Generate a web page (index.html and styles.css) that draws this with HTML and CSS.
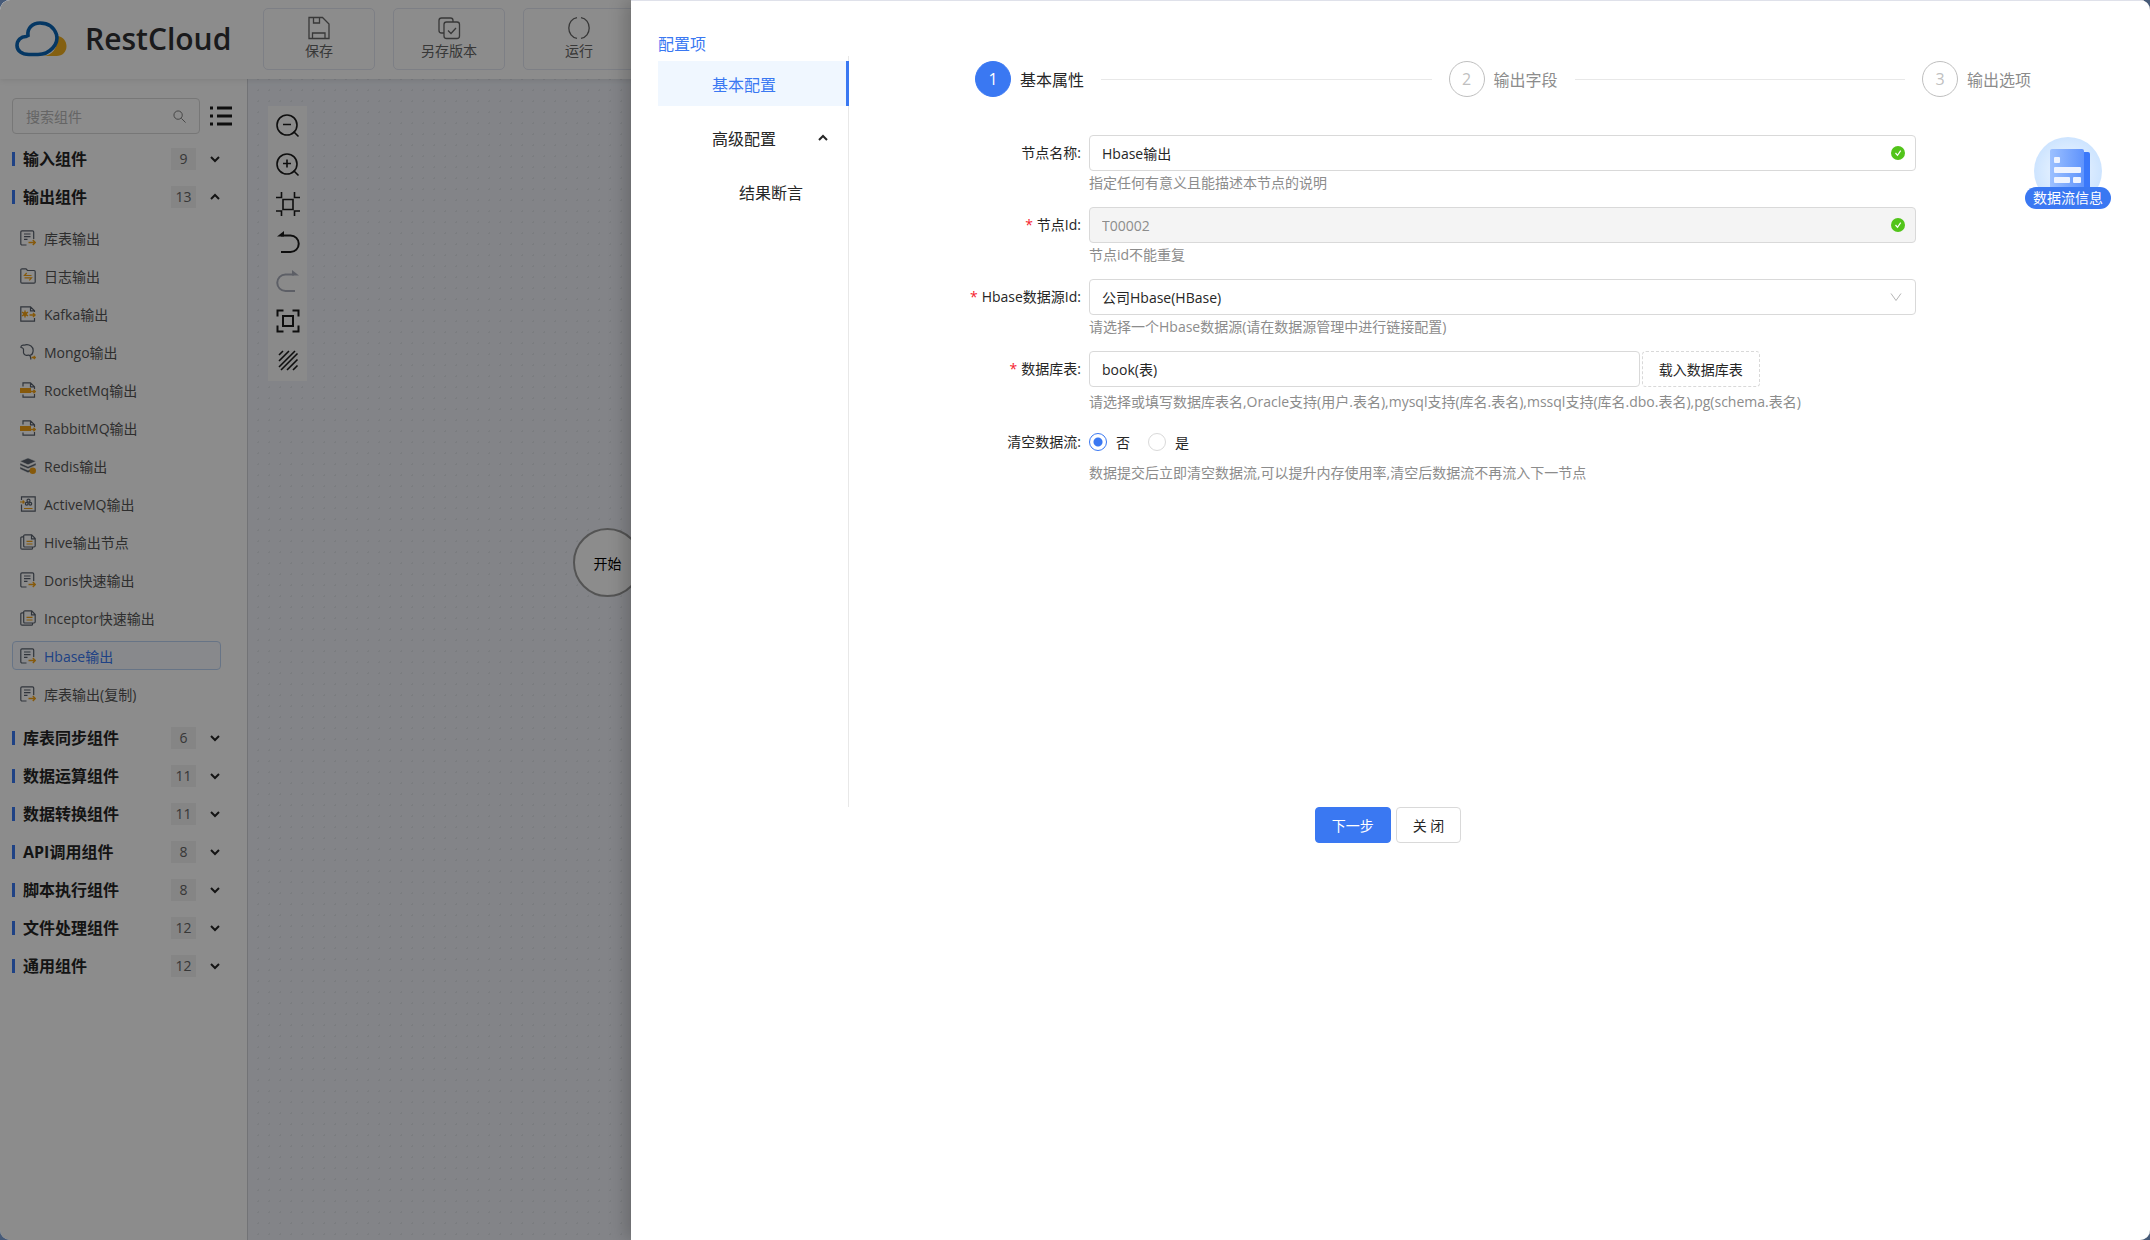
FILE: index.html
```html
<!DOCTYPE html>
<html lang="zh-CN">
<head>
<meta charset="utf-8">
<title>RestCloud</title>
<meta name="viewport" content="width=device-width, initial-scale=1">
<link rel="stylesheet" href="styles.css">
</head>
<body>
<svg class="sprite" aria-hidden="true">
  <symbol id="i-table" viewBox="0 0 16 16"><path class="ink" d="M6.5 15H2a1.2 1.2 0 0 1-1.200-1.200V2A1.200 1.200 0 0 1 2 .8h10.500A1.200 1.200 0 0 1 13.700 2v7M4 4h6.500M4 6.700h6.500M4 9.400h3.500"/><path class="gold" d="M8.500 12.500h6.500M12.800 10l2.500 2.500-2.500 2.500"/></symbol>
  <symbol id="i-log" viewBox="0 0 16 16"><path class="ink" d="M.8 14V2A1.200 1.200 0 0 1 2 .8h4l1.500 1.700H14A1.200 1.200 0 0 1 15.200 3.700V14A1.200 1.200 0 0 1 14 15.200H2A1.200 1.200 0 0 1 .8 14z"/><path class="gold-line" d="M11.500 7.500H4.500L6.700 5M4.500 9.800h7L9.300 12.300"/></symbol>
  <symbol id="i-kafka" viewBox="0 0 16 16"><path class="ink" d="M14.500 12v3.200H.8V.8h9.700l4 4V6M10.500.8v4h4"/><path class="gold" d="M5 4.500v7M2 6.200l6 3.600M2 9.800l6-3.600M9.500 9h5.500M13 7l2 2-2 2"/><circle class="gold-fill" cx="5" cy="8" r="2"/></symbol>
  <symbol id="i-mongo" viewBox="0 0 16 16"><path class="ink" d="M3.500 9V5.500C3.500 4 2.800 3.800 1 3.500.8 2 2 .8 4 1.200 6 .4 9 .6 11 2c2 1.500 2.500 4 1.800 6.500-.3 1.400-1.300 2.500-2.600 2.500M3.500 9c.6 1.800 2 2.600 3.500 2.300 1.300-.3 2.500-.5 3.200.7L11 15.500"/><path class="gold" d="M11.500 13.500h3.800M13.800 12l1.500 1.500-1.500 1.500"/></symbol>
  <symbol id="i-mq" viewBox="0 0 16 16"><path class="ink" d="M3 4.500V.8h7.500l4 4V7M10.500.8v4h4M3 12.500v2.700h11.500V12"/><path class="gold-fill" d="M0 6h11v5H0z"/><path class="gold" d="M11 9.500h4.300M13.500 7.800l1.700 1.700-1.700 1.700"/></symbol>
  <symbol id="i-redis" viewBox="0 0 16 16"><path class="ink-fill" d="M8 0l8 3.300-8 3.500L0 3.300zM0 5l8 3.500L16 5v2.200l-8 3.500-8-3.500zM0 8.800l8 3.500 3-1.300v2.500l-3 1.200-8-3.600z"/><circle class="gold-fill" cx="12.800" cy="12.700" r="3.200"/></symbol>
  <symbol id="i-active" viewBox="0 0 16 16"><path class="ink" d="M1.500 4V.8h13.700v14.400H1.500V8.500"/><circle class="ink" cx="8.500" cy="4.700" r="1.500"/><circle class="ink" cx="6.700" cy="7.700" r="1.400"/><circle class="ink" cx="10.300" cy="7.700" r="1.400"/><path class="gold-line" d="M0 6h4M2.700 4.500L4.200 6 2.700 7.500M4 12.500h8.500"/></symbol>
  <symbol id="i-docs" viewBox="0 0 16 16"><path class="ink" d="M3.700 2.800H2A1.200 1.200 0 0 0 .8 4v10A1.200 1.200 0 0 0 2 15.200h9.500a1 1 0 0 0 1-1V13M3.700 2V12a1 1 0 0 0 1 1H14a1.200 1.200 0 0 0 1.200-1.200V4.500L11.700.8H5A1.200 1.200 0 0 0 3.700 2zM11.500.8v4h3.700"/><path class="gold-line" d="M6.500 7.300h6M6.500 10h6"/></symbol>
  <symbol id="i-down" viewBox="0 0 12 12"><path class="arrow" d="M2 4l4 4 4-4"/></symbol>
  <symbol id="i-up" viewBox="0 0 12 12"><path class="arrow" d="M2 8l4-4 4 4"/></symbol>
  <symbol id="i-ok" viewBox="0 0 14 14"><circle class="ok-disc" cx="7" cy="7" r="7"/><path class="ok-tick" d="M4.500 7l2 2.300 3.200-4.600"/></symbol>
</svg>

<div class="app">
  <header class="topbar">
    <a class="brand" href="#">
      <svg class="brand-mark" viewBox="0 0 52 36" aria-hidden="true"><path class="brand-sun" d="M43 15c5 1 8.500 5 8.500 10 0 6-4 10-10 10H28c9-1 14-6 15-20z"/><path class="brand-cloud" d="M13 14.500C12 7 17.500 2 25 2c8 0 14 4.500 16.500 11.500C44 23 35 33.500 23 33.500H14C6.500 33.500 2 29.500 2 24.500 2 19 6 15.500 11 15.500z"/></svg>
      <span class="brand-name">RestCloud</span>
    </a>
    <nav class="actions">
      <button class="action" type="button"><svg viewBox="0 0 24 24"><path d="M2 1.500h13.500L22 8v14.500H2zM6.500 1.500v5.500h6v-5.500M5.500 22v-5h12.500v5"/></svg>保存</button>
      <button class="action" type="button"><svg viewBox="0 0 24 24"><path d="M7 17H4.500A2.500 2.500 0 0 1 2 14.500v-10A2.500 2.500 0 0 1 4.500 2h9A2.500 2.500 0 0 1 16 4.500V6"/><rect x="7" y="6" width="15.500" height="16.500" rx="2.500"/><path d="M11 14.500l3 3 5-5.500"/></svg>另存版本</button>
      <button class="action" type="button"><svg viewBox="0 0 24 24"><path d="M10 1.700C5 2.500 1.800 6.800 1.800 12S5 21.500 10 22.300M14 1.700c5 .8 8.200 5.100 8.200 10.300s-3.200 9.500-8.200 10.300"/></svg>运行</button>
    </nav>
  </header>

  <div class="workspace">
    <aside class="sidebar">
      <div class="finder">
        <label class="search"><input type="search" placeholder="搜索组件" aria-label="搜索组件"><svg viewBox="0 0 14 14"><circle cx="5.500" cy="5.500" r="4.500"/><path d="M9 9l4.500 4.500"/></svg></label>
        <button class="list-toggle" type="button" aria-label="列表"><svg viewBox="0 0 22 20"><path d="M0 2h3M7 2h15M0 10h3M7 10h15M0 18h3M7 18h15"/></svg></button>
      </div>
      <button class="group" type="button"><span class="group-name">输入组件</span><span class="count">9</span><svg class="chev"><use href="#i-down"/></svg></button>
      <button class="group" type="button" aria-expanded="true"><span class="group-name">输出组件</span><span class="count">13</span><svg class="chev"><use href="#i-up"/></svg></button>
      <ul class="items">
        <li><a class="item" href="#"><svg><use href="#i-table"/></svg>库表输出</a></li>
        <li><a class="item" href="#"><svg><use href="#i-log"/></svg>日志输出</a></li>
        <li><a class="item" href="#"><svg><use href="#i-kafka"/></svg>Kafka输出</a></li>
        <li><a class="item" href="#"><svg><use href="#i-mongo"/></svg>Mongo输出</a></li>
        <li><a class="item" href="#"><svg><use href="#i-mq"/></svg>RocketMq输出</a></li>
        <li><a class="item" href="#"><svg><use href="#i-mq"/></svg>RabbitMQ输出</a></li>
        <li><a class="item" href="#"><svg><use href="#i-redis"/></svg>Redis输出</a></li>
        <li><a class="item" href="#"><svg><use href="#i-active"/></svg>ActiveMQ输出</a></li>
        <li><a class="item" href="#"><svg><use href="#i-docs"/></svg>Hive输出节点</a></li>
        <li><a class="item" href="#"><svg><use href="#i-table"/></svg>Doris快速输出</a></li>
        <li><a class="item" href="#"><svg><use href="#i-docs"/></svg>Inceptor快速输出</a></li>
        <li><a class="item item--current" href="#"><svg><use href="#i-table"/></svg>Hbase输出</a></li>
        <li><a class="item" href="#"><svg><use href="#i-table"/></svg>库表输出(复制)</a></li>
      </ul>
      <button class="group" type="button"><span class="group-name">库表同步组件</span><span class="count">6</span><svg class="chev"><use href="#i-down"/></svg></button>
      <button class="group" type="button"><span class="group-name">数据运算组件</span><span class="count">11</span><svg class="chev"><use href="#i-down"/></svg></button>
      <button class="group" type="button"><span class="group-name">数据转换组件</span><span class="count">11</span><svg class="chev"><use href="#i-down"/></svg></button>
      <button class="group" type="button"><span class="group-name">API调用组件</span><span class="count">8</span><svg class="chev"><use href="#i-down"/></svg></button>
      <button class="group" type="button"><span class="group-name">脚本执行组件</span><span class="count">8</span><svg class="chev"><use href="#i-down"/></svg></button>
      <button class="group" type="button"><span class="group-name">文件处理组件</span><span class="count">12</span><svg class="chev"><use href="#i-down"/></svg></button>
      <button class="group" type="button"><span class="group-name">通用组件</span><span class="count">12</span><svg class="chev"><use href="#i-down"/></svg></button>
    </aside>

    <main class="canvas">
      <div class="tools">
        <button type="button" aria-label="缩小"><svg viewBox="0 0 24 24"><circle cx="11" cy="11" r="10"/><path d="M7 10.500h8M17.500 17.500l5 5"/></svg></button>
        <button type="button" aria-label="放大"><svg viewBox="0 0 24 24"><circle cx="11" cy="11" r="10"/><path d="M7 10.500h8M11 6.500v8M17.500 17.500l5 5"/></svg></button>
        <button type="button" aria-label="适应"><svg viewBox="0 0 24 24"><path d="M7 7.500h10v10H7zM0 5.500h5.500V0M18.500 0v5.500H24M0 19h5.500v5M24 19h-5.500v5"/></svg></button>
        <button type="button" aria-label="撤销"><svg class="bold" viewBox="0 0 24 24"><path d="M5 4.500h9.500a8 8 0 0 1 0 16.500H5"/><path class="solid" d="M1 5.500L8 0v5.500z"/></svg></button>
        <button type="button" aria-label="重做" disabled><svg class="bold" viewBox="0 0 24 24"><path d="M18 4.500H9.500a8 8 0 0 0 0 16.500H19"/><path class="solid" d="M23 5.500L16 0v5.500z"/></svg></button>
        <button type="button" aria-label="全屏"><svg class="bold" viewBox="0 0 24 24"><path d="M7 7h10v10H7zM1.500 7.500v-6h6M16.500 1.500h6v6M1.500 16.500v6h6M22.500 16.500v6h-6"/></svg></button>
        <button type="button" aria-label="网格"><svg viewBox="0 0 24 24"><path d="M3 7l4-4M3 13L13 3M3 19L19 3M5 22L21.500 5.500M11 22L21.500 11.500M17 22l4.500-4.500"/></svg></button>
      </div>
      <div class="node">开始</div>
    </main>
  </div>

  <div class="mask"></div>

  <section class="drawer" role="dialog" aria-label="配置项">
    <div class="drawer-body">
      <nav class="config">
        <h2 class="config-title">配置项</h2>
        <ul class="menu">
          <li><a class="menu-item menu-item--active" href="#">基本配置</a></li>
          <li><a class="menu-item" href="#">高级配置<svg class="chev"><use href="#i-up"/></svg></a></li>
          <li><a class="menu-item menu-item--child" href="#">结果断言</a></li>
        </ul>
      </nav>
      <div class="content">
        <ol class="steps">
          <li class="step step--active"><span class="step-no">1</span>基本属性</li>
          <li class="step"><span class="step-no">2</span>输出字段</li>
          <li class="step"><span class="step-no">3</span>输出选项</li>
        </ol>
        <div class="form-area">
          <form class="form" id="node-form">
            <label class="label" for="f-name">节点名称:</label>
            <div class="field">
              <div class="control"><input class="box" id="f-name" type="text" value="Hbase输出"><svg class="suffix"><use href="#i-ok"/></svg></div>
              <p class="hint">指定任何有意义且能描述本节点的说明</p>
            </div>
            <label class="label required" for="f-id">节点Id:</label>
            <div class="field">
              <div class="control"><input class="box" id="f-id" type="text" value="T00002" disabled><svg class="suffix"><use href="#i-ok"/></svg></div>
              <p class="hint">节点id不能重复</p>
            </div>
            <label class="label required" for="f-src">Hbase数据源Id:</label>
            <div class="field">
              <div class="control"><select class="box" id="f-src"><option>公司Hbase(HBase)</option></select><svg class="suffix suffix--caret" viewBox="0 0 14 14"><path d="M2 3.500l5 7 5-7"/></svg></div>
              <p class="hint">请选择一个Hbase数据源(请在数据源管理中进行链接配置)</p>
            </div>
            <label class="label required" for="f-table">数据库表:</label>
            <div class="field">
              <div class="control"><input class="box box--table" id="f-table" type="text" value="book(表)"><button class="btn btn--dashed" type="button">载入数据库表</button></div>
              <p class="hint hint--low">请选择或填写数据库表名,Oracle支持(用户.表名),mysql支持(库名.表名),mssql支持(库名.dbo.表名),pg(schema.表名)</p>
            </div>
            <span class="label label--radio" id="f-clear">清空数据流:</span>
            <div class="field">
              <div class="radios" role="radiogroup" aria-labelledby="f-clear">
                <label class="radio"><input type="radio" name="clear" checked>否</label>
                <label class="radio"><input type="radio" name="clear">是</label>
              </div>
              <p class="hint hint--low">数据提交后立即清空数据流,可以提升内存使用率,清空后数据流不再流入下一节点</p>
            </div>
          </form>
          <button class="info" type="button">
            <svg viewBox="0 0 68 50" aria-hidden="true">
              <defs>
                <radialGradient id="g-disc"><stop offset="0" stop-color="#f2f8ff"/><stop offset="1" stop-color="#cde4ff"/></radialGradient>
                <linearGradient id="g-page" x1="0" y1="0" x2="1" y2="0"><stop offset="0" stop-color="#9cc0ff"/><stop offset="1" stop-color="#5f93fc"/></linearGradient>
              </defs>
              <circle cx="34" cy="34" r="34" fill="url(#g-disc)"/>
              <rect x="44" y="15" width="12" height="40" rx="2" fill="#3a78fa"/>
              <rect x="16" y="12" width="34" height="42" rx="2" fill="url(#g-page)"/>
              <g fill="#eef3ff"><rect x="20" y="20" width="6" height="6" rx="1"/><rect x="20" y="30" width="27" height="6" rx="1"/><rect x="20" y="40" width="16" height="6" rx="1"/><rect x="39" y="40" width="8" height="6" rx="1"/></g>
            </svg>
            <span class="info-tag">数据流信息</span>
          </button>
        </div>
      </div>
    </div>
    <footer class="drawer-foot">
      <button class="btn btn--primary" type="submit" form="node-form">下一步</button>
      <button class="btn" type="button">关 闭</button>
    </footer>
  </section>
</div>
</body>
</html>
```
FILE: styles.css
```css
*, *::before, *::after { box-sizing: border-box; }

:root {
  --blue: #3a78f2;
  --line: #d9d9d9;
  --text: #262626;
  --muted: #8c8c8c;
}

body {
  margin: 0;
  background: #465a78;
  color: var(--text);
  font-family: "Open Sans", "Noto Sans CJK SC", sans-serif;
  font-size: 14px;
}

button, input, select { font: inherit; color: inherit; }
button { padding: 0; border: 0; background: none; cursor: pointer; }
a { color: inherit; text-decoration: none; }
ul, ol { margin: 0; padding: 0; list-style: none; }
svg { flex: none; fill: none; stroke: currentColor; }

.sprite { position: absolute; width: 0; height: 0; }
.ink { fill: none; stroke: #59626e; stroke-width: 1.2; }
.ink-fill { fill: #59626e; stroke: #fff; stroke-width: .5; }
.gold { fill: none; stroke: #f5a314; stroke-width: 1.4; }
.gold-line { fill: none; stroke: #f5a314; stroke-width: 1.2; }
.gold-fill { fill: #f5a314; stroke: none; }
.arrow { fill: none; stroke: currentColor; stroke-width: 2; }
.ok-disc { fill: #52c41a; stroke: none; }
.ok-tick { fill: none; stroke: #fff; stroke-width: 1.2; }
.chev { width: 12px; height: 12px; }

.app {
  position: relative;
  display: flex;
  flex-direction: column;
  min-height: 100vh;
  overflow: hidden;
  border-radius: 10px;
  background: #fff;
}

/* Top bar */
.topbar {
  z-index: 1;
  display: flex;
  align-items: center;
  height: 79px;
  padding: 0 0 2px 15px;
  background: #fff;
  box-shadow: 0 1px 6px rgba(0, 0, 0, .1);
}
.brand { display: flex; align-items: center; gap: 18px; width: 248px; }
.brand-mark { width: 52px; height: 36px; }
.brand-sun { fill: #f0b020; stroke: none; }
.brand-cloud { fill: #fff; stroke: #0a64b4; stroke-width: 3.6; }
.brand-name { color: #303133; font-size: 30px; font-weight: 600; line-height: 40px; }
.actions { display: flex; gap: 18px; }
.action {
  display: flex;
  flex-direction: column;
  align-items: center;
  justify-content: center;
  gap: 1px;
  width: 112px;
  height: 62px;
  border: 1px solid #e4e7f2;
  border-radius: 5px;
  color: #666;
  line-height: 20px;
}
.action svg { width: 24px; height: 24px; stroke-width: 1.3; }

/* Component library */
.workspace { display: flex; flex: 1; }
.sidebar {
  flex: none;
  width: 248px;
  padding: 19px 26px 0 12px;
  border-right: 1px solid #d0d2d8;
}
.finder { display: flex; align-items: center; gap: 10px; margin: 0 -11px 6px 0; }
.search {
  display: flex;
  align-items: center;
  width: 188px;
  height: 36px;
  padding: 0 13px;
  border: 1px solid var(--line);
  border-radius: 4px;
}
.search input { flex: 1; min-width: 0; padding: 0; border: 0; outline: 0; background: none; }
.search input::placeholder { color: #b8b8b8; }
.search svg { width: 13px; height: 13px; color: #777; }
.list-toggle { display: flex; color: #1a1a1a; }
.list-toggle svg { width: 22px; height: 20px; stroke-width: 3; }

.group {
  display: flex;
  align-items: center;
  width: 100%;
  height: 38px;
  text-align: left;
}
.group::before { content: ""; width: 3px; height: 14px; margin-right: 8px; background: var(--blue); }
.group-name { flex: 1; font-size: 16px; font-weight: 700; line-height: 24px; }
.count { width: 25px; margin-right: 13px; background: #f2f2f2; color: #666; line-height: 22px; text-align: center; }

.items { display: grid; gap: 9px; padding: 7px 0 11px; }
.item {
  display: flex;
  align-items: center;
  gap: 8px;
  height: 29px;
  padding-left: 7px;
  border: 1px solid transparent;
  border-radius: 4px;
  color: #555;
}
.item svg { width: 16px; height: 16px; }
.item--current { border-color: #bcd4f5; background: #f7faff; color: var(--blue); }

/* Flow canvas */
.canvas {
  position: relative;
  flex: 1;
  background: radial-gradient(circle, #e0e3ea 1px, transparent 1px) 5px 6px / 11px 11px #eef1f8;
}
.tools {
  position: absolute;
  top: 27px;
  left: 20px;
  display: grid;
  padding-bottom: 2px;
  background: #fcfcfc;
}
.tools button { display: grid; place-items: center; width: 39px; height: 39px; color: #1a1a1a; }
.tools svg { width: 24px; height: 24px; stroke-width: 1.6; }
.tools .bold { stroke-width: 2; }
.tools .solid { fill: currentColor; stroke: none; }
.tools button:disabled { color: #a9aebb; }
.node {
  position: absolute;
  top: 449px;
  left: 325px;
  display: grid;
  place-items: center;
  width: 69px;
  height: 69px;
  border: 2px solid #999;
  border-radius: 50%;
  background: #fff;
  color: #000;
}

.mask { position: absolute; inset: 0; z-index: 2; background: rgba(0, 0, 0, .45); }

/* Configuration drawer */
.drawer {
  position: absolute;
  inset: 0 0 0 631px;
  z-index: 3;
  border-top: 1px solid #dfe1ea;
  background: #fff;
  box-shadow: -6px 0 16px rgba(0, 0, 0, .2);
}
.drawer-body { display: flex; min-height: 65vh; padding-top: 31px; }
.config { display: flex; flex-direction: column; flex: none; width: 218px; padding-left: 27px; }
.config-title { margin: 0; color: var(--blue); font-size: 16px; font-weight: 400; line-height: 24px; }
.menu { flex: 1; display: flex; flex-direction: column; gap: 9px; padding-top: 5px; border-right: 1px solid #e8e8e8; }
.menu-item {
  display: flex;
  align-items: center;
  justify-content: space-between;
  height: 45px;
  margin-right: -1px;
  padding: 0 20px 0 54px;
  font-size: 16px;
}
.menu-item--active { border-right: 3px solid var(--blue); background: #f0f7ff; color: var(--blue); }
.menu-item--child { padding-left: 81px; }

.content { flex: 1; min-width: 0; padding: 29px 39px 0 0; }
.steps { display: flex; padding: 0 80px 0 126px; }
.step { display: flex; align-items: center; color: var(--muted); font-size: 16px; white-space: nowrap; }
.step:not(:last-child) { flex: 1; }
.step:not(:last-child)::after { content: ""; flex: 1; height: 1px; margin: 0 17px; background: #e8e8e8; }
.step-no {
  display: grid;
  place-items: center;
  width: 36px;
  height: 36px;
  margin-right: 9px;
  border: 1px solid #bfbfbf;
  border-radius: 50%;
  color: #bfbfbf;
}
.step--active { color: var(--text); }
.step--active .step-no { border-color: var(--blue); background: var(--blue); color: #fff; }

.form-area { display: flex; align-items: flex-start; gap: 109px; padding-top: 38px; }
.form { flex: 1; display: grid; grid-template-columns: 232px 1fr; column-gap: 8px; row-gap: 12px; }
.label { line-height: 36px; text-align: right; }
.label--radio { line-height: 32px; }
.required::before { content: "*"; margin-right: 4px; color: #f5222d; }
.control { position: relative; display: flex; gap: 2px; }
.box {
  flex: 1;
  width: 100%;
  height: 36px;
  padding: 0 12px;
  border: 1px solid var(--line);
  border-radius: 4px;
  background: #fff;
  appearance: none;
}
.box:disabled { background: #f4f4f4; color: var(--muted); opacity: 1; }
.box--table { flex: none; width: calc(66% + 5px); }
.suffix { position: absolute; top: 11px; right: 11px; width: 14px; height: 14px; pointer-events: none; }
.suffix--caret { right: 13px; color: #b5b5b5; }
.hint { margin: 0; color: var(--muted); line-height: 24px; }
.hint--low { margin-top: 3px; }

.radios { display: flex; gap: 18px; height: 32px; }
.radio { display: flex; align-items: center; gap: 9px; }
.radio input {
  appearance: none;
  width: 18px;
  height: 18px;
  margin: 0;
  border: 1px solid var(--line);
  border-radius: 50%;
}
.radio input:checked { border-color: var(--blue); background: radial-gradient(circle, var(--blue) 4px, transparent 5px); }

.btn {
  height: 36px;
  padding: 0 16px;
  border: 1px solid var(--line);
  border-radius: 4px;
  background: #fff;
}
.btn--dashed { border-style: dashed; }
.btn--primary { border-color: var(--blue); background: var(--blue); color: #fff; }

.info { display: flex; flex-direction: column; align-items: center; padding-top: 2px; }
.info svg { width: 68px; height: 50px; stroke: none; }
.info-tag { width: 86px; border-radius: 11px; background: var(--blue); color: #fff; line-height: 22px; }

.drawer-foot { display: flex; justify-content: center; gap: 5px; padding-right: 5px; }
```
